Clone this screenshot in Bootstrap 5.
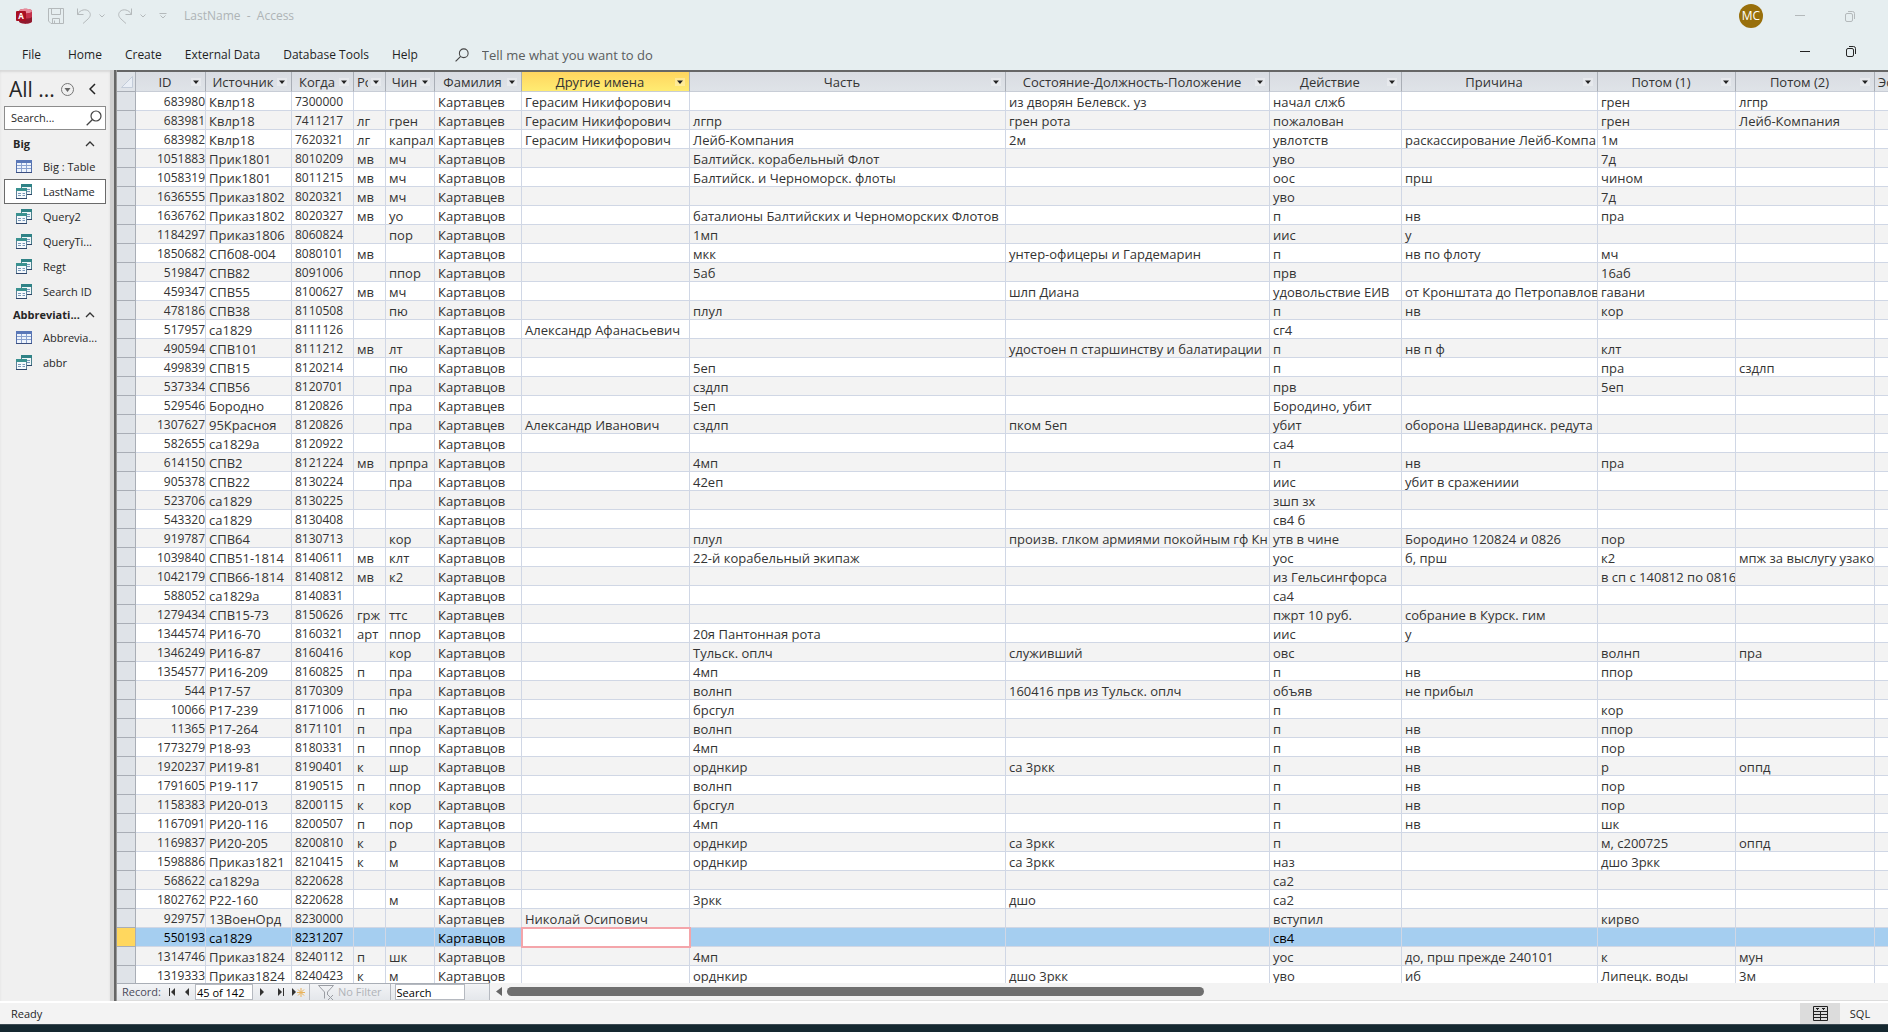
<!DOCTYPE html>
<html lang="ru">
<head>
<meta charset="utf-8">
<meta name="viewport" content="width=device-width, initial-scale=1">
<title>LastName - Access</title>
<link href="https://cdn.jsdelivr.net/npm/bootstrap@5.3.0/dist/css/bootstrap.min.css" rel="stylesheet">
<script src="https://cdn.jsdelivr.net/npm/bootstrap@5.3.0/dist/js/bootstrap.bundle.min.js"></script>
<style>
  body { font-family: "Open Sans", "Noto Sans", sans-serif; font-size: 12px; line-height: 18px; color: #262626; background: #f0f0f0; }
  button, input { font: inherit; color: inherit; }
  button { background: none; border: 0; padding: 0; }
  svg { display: block; flex: none; }

  .app-top { background: #e6eef0; }
  .title-bar { height: 32px; padding: 0 17px 0 16px; color: #b4b9bb; }
  .title-bar .doc-title { margin-left: 17px; color: #aeb4b6; }
  .quick-tools { gap: 13px; margin-left: 16px; }
  .avatar { width: 24px; height: 24px; border-radius: 50%; background: #986f0b; color: #fff; }
  .ribbon { height: 38px; padding: 14px 32px 0 22px; }
  .ribbon-tabs { gap: 23px; }
  .ribbon .ribbon-tab { color: #1f1f1f; text-decoration: none; }
  .tell-box { margin-left: 37px; gap: 13px; }
  .tell-me { width: 200px; border: 0; background: none; padding: 0; outline: 0; font-size: 13px; }
  .tell-me::placeholder { color: #5a5d5e; opacity: 1; }
  .doc-buttons { gap: 36px; }

  .nav-pane { width: 110px; background: #f0f0f0; box-shadow: inset 0 2px 2px #d8d8d8; padding: 2px 4px 0; }
  .nav-pane h1 { font-size: 21px; line-height: 32px; margin: 0; font-weight: 400; color: #262626; width: 52px; white-space: nowrap; }
  .pane-head { height: 34px; padding: 0 10px 0 5px; }
  .pane-search { width: 102px; height: 24px; margin-bottom: 3px; border: 1px solid #8c8c8c; background: #fff; padding: 0 3px 0 6px; }
  .pane-search input { border: 0; outline: 0; background: none; width: 70px; padding: 0; font-size: 11px; }
  .pane-search input::placeholder { color: #262626; opacity: 1; }
  .pane-group { height: 21px; padding: 0 11px 0 9px; font-size: 11px; font-weight: 700; width: 100%; }
  .pane-item { height: 25px; width: 102px; padding: 0 4px 0 11px; gap: 11px; font-size: 11px; color: #262626; text-decoration: none; border: 1px solid transparent; }
  .pane-item.active-item { background: #fff; border-color: #6a6a6a; }
  .splitter { width: 7px; background: linear-gradient(to right, #cfcfcf 0 4px, #666 4px 6px, #999 6px); }

  .sheet { border-top: 2px solid #666; background: #fff; min-width: 0; }
  .grid-wrap { flex: 1 1 0; overflow: hidden; }
  .datasheet { table-layout: fixed; width: 1800px; border-collapse: separate; border-spacing: 0; color: #333; font-size: 13px; }
  .datasheet th, .datasheet td { height: 19px; line-height: 16px; padding: 2px 0 0 3px; border-right: 1px solid #d0d7e5; border-bottom: 1px solid #d0d7e5; white-space: nowrap; overflow: hidden; }
  .datasheet thead th { height: 20px; font-weight: 400; background: linear-gradient(#d9dce2, #dfe3e8); border-right-color: #a9aeb6; border-bottom-color: #c8cdd6; padding: 0 4px 0 3px; }
  .datasheet thead th.picked { background: linear-gradient(#ffd55f, #ffec72); }
  .head-cell { height: 19px; line-height: 18px; }
  .head-cell span { flex: 1 1 0; overflow: hidden; text-align: center; }
  .datasheet thead th.cut span { text-align: left; margin-right: 3px; }
  .datasheet .row-sel { background: #dfe3e8; border-right-color: #a9aeb6; border-bottom-color: #a9aeb6; padding: 0; }
  .datasheet tbody tr:nth-child(even) td { background: #f3f3f3; }
  .datasheet td.digits { font-size: 12px; }
  .datasheet td.num { text-align: right; padding-left: 0; }
  .datasheet tbody tr.current td { background: #a5cef0; color: #000; }
  .datasheet tbody tr.current .row-sel { background: #ffd75e; }
  .datasheet tbody tr.current td.editing { background: #fff; outline: 2px solid #f4a5aa; outline-offset: -1px; position: relative; }

  .record-bar { height: 18px; background: #f3f3f3; border-bottom: 1px solid #dcdcdc; }
  .record-nav { width: 373px; height: 17px; font-size: 11px; line-height: 14px; background: linear-gradient(#f3f4f6, #e4e7eb); border-top: 1px solid #a9aeb6; border-right: 1px solid #b5b9c0; padding-left: 5px; color: #4a4a5a; }
  .record-nav input { height: 16px; border: 1px solid #b5b9c0; background: #fff; padding: 0 1px; color: #000; border-radius: 0; outline: 0; }
  .record-pos { width: 58px; margin: 0 7px 0 6px; }
  .record-find { width: 70px; }
  .nav-rule { width: 1px; height: 16px; background: #b5b9c0; }
  .muted-text { color: #b0b3b8; }
  .scroll-track { min-width: 0; padding-left: 5px; }
  .scroll-thumb { width: 50%; height: 9px; border-radius: 5px; background: #6f6f6f; }
  .status-bar { height: 21px; background: #f3f3f3; padding-left: 11px; font-size: 11px; }
  .status-wrap { background: #fff; padding-top: 2px; }
  .view-btn { width: 40px; height: 21px; }
  .view-btn.on { background: #dcdcdc; }
  .desk-edge { height: 8px; background: #152830; border-top: 1px solid #3c4a52; }
</style>
</head>
<body class="vh-100 overflow-hidden d-flex flex-column">

<svg width="0" height="0" class="position-absolute" aria-hidden="true">
  <symbol id="i-table" viewBox="0 0 16 13">
    <rect x=".5" y=".5" width="15" height="12" fill="#eef4fc" stroke="#5470ad"/>
    <rect x="0" y="0" width="16" height="3" fill="#5a78b8"/>
    <path d="M1 5.500H15M1 8.500H15M5.500 3V12M10.500 3V12" stroke="#8aa2d0" fill="none"/>
    <path d="M0 12.500H16" stroke="#3b4f80"/>
  </symbol>
  <symbol id="i-query" viewBox="0 0 16 15">
    <rect x="5.500" y=".5" width="10" height="10" fill="#eef6f8" stroke="#4a7f8c"/>
    <rect x="5" y="0" width="11" height="3" fill="#2f8286"/>
    <path d="M11 5.500H14M11 7.500H14" stroke="#7796b8"/>
    <rect x=".5" y="4.500" width="10" height="10" fill="#f5f9fc" stroke="#5d7f99"/>
    <rect x="0" y="4" width="11" height="3" fill="#3a9190"/>
    <path d="M2 9.500H5M6.500 9.500H9M2 11.500H5M6.500 11.500H9" stroke="#7796b8"/>
    <path d="M0 14.500H11M11 10.500H16" stroke="#2f466b"/>
  </symbol>
  <symbol id="i-drop" viewBox="0 0 10 8">
    <rect width="10" height="8" fill="#fff" opacity=".3"/>
    <path d="M2 2.500H8L5 6Z" fill="#222"/>
  </symbol>
  <symbol id="i-up" viewBox="0 0 10 6"><path d="M1 5L5 1L9 5" fill="none" stroke="#333" stroke-width="1.300"/></symbol>
  <symbol id="i-chev" viewBox="0 0 6 4"><path d="M.5 .5L3 3L5.500 .5" fill="none" stroke="#b4b9bb"/></symbol>
  <symbol id="i-find" viewBox="0 0 16 16"><circle cx="10" cy="6" r="5" fill="none" stroke="#444" stroke-width="1.200"/><path d="M6.500 9.500L.7 15.300" stroke="#444" stroke-width="1.300"/></symbol>
  <symbol id="i-restore" viewBox="0 0 10 11"><rect x=".5" y="2.500" width="7" height="8" rx="1.500" fill="none" stroke="currentColor"/><path d="M3 .5H7.500A2 2 0 0 1 9.500 2.500V8" fill="none" stroke="currentColor"/></symbol>
</svg>

<header class="app-top">
  <div class="title-bar d-flex align-items-center">
    <svg width="16" height="16" viewBox="0 0 16 16" role="img" aria-label="Access">
      <path d="M3 3C3 0 16 0 16 3V13C16 16.500 3 16.500 3 13Z" fill="#c4314b"/>
      <path d="M3 3C3 0 16 0 16 3C16 6 3 6 3 3Z" fill="#e88a9a"/>
      <path d="M3 9C5 11 14 11 16 9V13C16 16.500 3 16.500 3 13Z" fill="#8f1a2e"/>
      <rect x="0" y="3" width="10" height="10" rx="1" fill="#a80f22"/>
      <text x="5" y="11" text-anchor="middle" font-size="8" font-weight="700" fill="#fff">A</text>
    </svg>
    <div class="quick-tools d-flex align-items-center">
      <button aria-label="Save"><svg width="16" height="16" viewBox="0 0 16 16" fill="none" stroke="#b4b9bb"><path d="M.5 .5H15.500V15.500H3L.5 13ZM3.500 .5V6.500H12.500V.5M4.500 15.500V10.500H11.500V15.500M6.500 15.500V12.500"/></svg></button>
      <button class="d-flex align-items-center gap-2" aria-label="Undo"><svg width="14" height="16" viewBox="0 0 14 16" fill="none" stroke="#b4b9bb"><path d="M.5 .5V6.500H6.500M.5 6.500C3 1.500 9 .5 12 3.500C14.500 6.500 13 9 11 11L6 15.500"/></svg><svg width="6" height="4"><use href="#i-chev"/></svg></button>
      <button class="d-flex align-items-center gap-2" aria-label="Redo"><svg width="14" height="16" viewBox="0 0 14 16" fill="none" stroke="#b4b9bb"><path d="M13.500 .5V6.500H7.500M13.500 6.500C11 1.500 5 .5 2 3.500C-.5 6.500 1 9 3 11L8 15.500"/></svg><svg width="6" height="4"><use href="#i-chev"/></svg></button>
      <button aria-label="Customize toolbar"><svg width="8" height="6" viewBox="0 0 8 6"><path d="M.5 .5H7.500M1.500 2.500L4 5L6.500 2.500" fill="none" stroke="#b4b9bb"/></svg></button>
    </div>
    <span class="doc-title">LastName &nbsp;-&nbsp; Access</span>
    <span class="avatar ms-auto d-flex align-items-center justify-content-center">MC</span>
    <button class="ms-4 ps-2" aria-label="Minimize"><svg width="10" height="10" viewBox="0 0 10 10"><path d="M0 4.500H10" stroke="#b4b9bb"/></svg></button>
    <button class="ms-4 ps-3 pe-3" aria-label="Restore"><svg width="10" height="11"><use href="#i-restore"/></svg></button>
  </div>
  <div class="ribbon d-flex align-items-start">
    <nav class="ribbon-tabs d-flex">
      <a class="ribbon-tab me-1" href="#">File</a>
      <a class="ribbon-tab" href="#">Home</a>
      <a class="ribbon-tab" href="#">Create</a>
      <a class="ribbon-tab" href="#">External Data</a>
      <a class="ribbon-tab" href="#">Database Tools</a>
      <a class="ribbon-tab" href="#">Help</a>
    </nav>
    <label class="tell-box d-flex align-items-center"><svg width="14" height="14"><use href="#i-find"/></svg><input class="tell-me" type="text" placeholder="Tell me what you want to do" aria-label="Tell me what you want to do"></label>
    <div class="doc-buttons ms-auto d-flex align-items-center">
      <button aria-label="Minimize document"><svg width="10" height="10" viewBox="0 0 10 10"><path d="M0 4.500H10" stroke="#222"/></svg></button>
      <button aria-label="Restore document"><svg width="10" height="11"><use href="#i-restore"/></svg></button>
    </div>
  </div>
</header>

<div class="d-flex flex-grow-1 overflow-hidden">
  <aside class="nav-pane flex-shrink-0">
    <div class="pane-head d-flex align-items-center">
      <h1>All ...</h1>
      <button aria-label="Choose category"><svg width="13" height="13" viewBox="0 0 13 13"><circle cx="6.500" cy="6.500" r="6" fill="none" stroke="#777"/><path d="M3.500 5H9.500L6.500 9Z" fill="#666"/></svg></button>
      <button class="ms-auto" aria-label="Collapse pane"><svg width="7" height="12" viewBox="0 0 7 12"><path d="M6 1L1 6L6 11" fill="none" stroke="#222" stroke-width="1.500"/></svg></button>
    </div>
    <label class="pane-search d-flex align-items-center justify-content-between"><input type="text" placeholder="Search..." aria-label="Search objects"><svg width="16" height="16"><use href="#i-find"/></svg></label>
    <button class="pane-group d-flex align-items-center justify-content-between">Big<svg width="10" height="6"><use href="#i-up"/></svg></button>
    <a class="pane-item d-flex align-items-center" href="#"><svg width="16" height="13"><use href="#i-table"/></svg><span class="text-nowrap">Big : Table</span></a>
    <a class="pane-item active-item d-flex align-items-center" href="#"><svg width="16" height="15"><use href="#i-query"/></svg><span>LastName</span></a>
    <a class="pane-item d-flex align-items-center" href="#"><svg width="16" height="15"><use href="#i-query"/></svg><span>Query2</span></a>
    <a class="pane-item d-flex align-items-center" href="#"><svg width="16" height="15"><use href="#i-query"/></svg><span>QueryTi...</span></a>
    <a class="pane-item d-flex align-items-center" href="#"><svg width="16" height="15"><use href="#i-query"/></svg><span>Regt</span></a>
    <a class="pane-item d-flex align-items-center" href="#"><svg width="16" height="15"><use href="#i-query"/></svg><span>Search ID</span></a>
    <button class="pane-group d-flex align-items-center justify-content-between">Abbreviati...<svg width="10" height="6"><use href="#i-up"/></svg></button>
    <a class="pane-item d-flex align-items-center" href="#"><svg width="16" height="13"><use href="#i-table"/></svg><span>Abbrevia...</span></a>
    <a class="pane-item d-flex align-items-center" href="#"><svg width="16" height="15"><use href="#i-query"/></svg><span>abbr</span></a>
  </aside>
  <div class="splitter flex-shrink-0"></div>

  <main class="sheet flex-grow-1 d-flex flex-column">
    <div class="grid-wrap">
      <table class="datasheet">
        <colgroup id="cols"></colgroup>
        <thead><tr id="heads"></tr></thead>
        <tbody id="records"></tbody>
      </table>
    </div>
    <div class="record-bar d-flex">
      <div class="record-nav d-flex align-items-center flex-shrink-0">
        <label for="pos">Record:</label>
        <button class="ms-2" aria-label="First record"><svg width="7" height="8" viewBox="0 0 7 8"><path d="M.5 0V8" stroke="#333"/><path d="M6 0V8L2 4Z" fill="#333"/></svg></button>
        <button class="ms-2" aria-label="Previous record"><svg width="5" height="8" viewBox="0 0 5 8"><path d="M5 0V8L1 4Z" fill="#333"/></svg></button>
        <input class="record-pos" id="pos" type="text" value="45 of 142">
        <button aria-label="Next record"><svg width="5" height="8" viewBox="0 0 5 8"><path d="M0 0V8L4 4Z" fill="#333"/></svg></button>
        <button class="ms-2 ps-1" aria-label="Last record"><svg width="7" height="8" viewBox="0 0 7 8"><path d="M6.500 0V8" stroke="#333"/><path d="M1 0V8L5 4Z" fill="#333"/></svg></button>
        <button class="ms-2" aria-label="New record"><svg width="13" height="9" viewBox="0 0 13 9"><path d="M0 0V8L4 4Z" fill="#333"/><path d="M9 0V9M5 4.500H13M6 1.500L12 7.500M12 1.500L6 7.500" stroke="#e8b25a"/></svg></button>
        <span class="nav-rule ms-1 me-2"></span>
        <svg width="16" height="15" viewBox="0 0 16 15" fill="none" stroke="#9a9da3"><path d="M.5 .5H15.500L9.500 7V10M.5 .5L6.500 7V13.500M10 10L15 15M15 10L10 15"/></svg>
        <span class="muted-text ms-1 text-nowrap">No Filter</span>
        <span class="nav-rule ms-2 me-1"></span>
        <input class="record-find" type="text" value="Search" aria-label="Search records">
      </div>
      <div class="scroll-track flex-grow-1 d-flex align-items-center gap-1">
        <svg width="8" height="9" viewBox="0 0 8 9"><path d="M7 0V9L1 4.500Z" fill="#666"/></svg>
        <div class="scroll-thumb"></div>
      </div>
    </div>
  </main>
</div>

<footer class="status-wrap">
  <div class="status-bar d-flex align-items-center">
    <span>Ready</span>
    <button class="view-btn on ms-auto d-flex align-items-center justify-content-center" aria-label="Datasheet view"><svg width="15" height="15" viewBox="0 0 15 15" fill="none" stroke="#222"><path d="M.5 .5H14.500V14.500H.5ZM.5 5.500H14.500M.5 8.500H14.500M.5 11.500H14.500M7.500 5.500V14.500M3 2.500H6M9 2.500H12M4 3.500H5M10 3.500H11"/></svg></button>
    <button class="view-btn me-2">SQL</button>
  </div>
  <div class="desk-edge"></div>
</footer>

<script>
  // name, column width
  const columns = [["ID",70],["Источник",86],["Когда",62],["Ро",32],["Чин",49],["Фамилия",87],["Другие имена",168],["Часть",316],["Состояние-Должность-Положение",264],["Действие",132],["Причина",196],["Потом (1)",138],["Потом (2)",139],["Эс",100]];
  const data = `683980|Квлр18|7300000|||Картавцев|Герасим Никифорович||из дворян Белевск. уз|начал слжб||грен|лгпр
683981|Квлр18|7411217|лг|грен|Картавцев|Герасим Никифорович|лгпр|грен рота|пожалован||грен|Лейб-Компания
683982|Квлр18|7620321|лг|капрал|Картавцев|Герасим Никифорович|Лейб-Компания|2м|увлотств|раскассирование Лейб-Компа|1м|
1051883|Прик1801|8010209|мв|мч|Картавцов||Балтийск. корабельный Флот||уво||7д|
1058319|Прик1801|8011215|мв|мч|Картавцов||Балтийск. и Черноморск. флоты||оос|прш|чином|
1636555|Приказ1802|8020321|мв|мч|Картавцев||||уво||7д|
1636762|Приказ1802|8020327|мв|уо|Картавцов||баталионы Балтийских и Черноморских Флотов||п|нв|пра|
1184297|Приказ1806|8060824||пор|Картавцов||1мп||иис|у||
1850682|СПб08-004|8080101|мв||Картавцов||мкк|унтер-офицеры и Гардемарин|п|нв по флоту|мч|
519847|СПВ82|8091006||ппор|Картавцов||5аб||прв||16аб|
459347|СПВ55|8100627|мв|мч|Картавцов|||шлп Диана|удовольствие ЕИВ|от Кронштата до Петропавлов|гавани|
478186|СПВ38|8110508||пю|Картавцов||плул||п|нв|кор|
517957|са1829|8111126|||Картавцов|Александр Афанасьевич|||сг4|||
490594|СПВ101|8111212|мв|лт|Картавцов|||удостоен п старшинству и балатирации|п|нв п ф|клт|
499839|СПВ15|8120214||пю|Картавцов||5еп||п||пра|сздлп
537334|СПВ56|8120701||пра|Картавцов||сздлп||прв||5еп|
529546|Бородно|8120826||пра|Картавцев||5еп||Бородино, убит|||
1307627|95Красноя|8120826||пра|Картавцев|Александр Иванович|сздлп|пком 5еп|убит|оборона Шевардинск. редута||
582655|са1829а|8120922|||Картавцов||||са4|||
614150|СПВ2|8121224|мв|прпра|Картавцов||4мп||п|нв|пра|
905378|СПВ22|8130224||пра|Картавцов||42еп||иис|убит в сражениии||
523706|са1829|8130225|||Картавцов||||зшп зх|||
543320|са1829|8130408|||Картавцов||||св4 б|||
919787|СПВ64|8130713||кор|Картавцов||плул|произв. глком армиями покойным гф Кн|утв в чине|Бородино 120824 и 0826|пор|
1039840|СПВ51-1814|8140611|мв|клт|Картавцов||22-й корабельный экипаж||уос|б, прш|к2|мпж за выслугу узако
1042179|СПВ66-1814|8140812|мв|к2|Картавцов||||из Гельсингфорса||в сп с 140812 по 0816|
588052|са1829а|8140831|||Картавцов||||са4|||
1279434|СПВ15-73|8150626|грж|ттс|Картавцев||||пжрт 10 руб.|собрание в Курск. гим||
1344574|РИ16-70|8160321|арт|ппор|Картавцов||20я Пантонная рота||иис|у||
1346249|РИ16-87|8160416||кор|Картавцов||Тульск. оплч|служивший|овс||волнп|пра
1354577|РИ16-209|8160825|п|пра|Картавцов||4мп||п|нв|ппор|
544|Р17-57|8170309||пра|Картавцов||волнп|160416 прв из Тульск. оплч|объяв|не прибыл||
10066|Р17-239|8171006|п|пю|Картавцов||брсгул||п||кор|
11365|Р17-264|8171101|п|пра|Картавцов||волнп||п|нв|ппор|
1773279|Р18-93|8180331|п|ппор|Картавцов||4мп||п|нв|пор|
1920237|РИ19-81|8190401|к|шр|Картавцов||орднкир|са 3ркк|п|нв|р|оппд
1791605|Р19-117|8190515|п|ппор|Картавцов||волнп||п|нв|пор|
1158383|РИ20-013|8200115|к|кор|Картавцов||брсгул||п|нв|пор|
1167091|РИ20-116|8200507|п|пор|Картавцов||4мп||п|нв|шк|
1169837|РИ20-205|8200810|к|р|Картавцов||орднкир|са 3ркк|п||м, с200725|оппд
1598886|Приказ1821|8210415|к|м|Картавцов||орднкир|са 3ркк|наз||дшо 3ркк|
568622|са1829а|8220628|||Картавцов||||са2|||
1802762|Р22-160|8220628||м|Картавцов||3ркк|дшо|са2|||
929757|13ВоенОрд|8230000|||Картавцев|Николай Осипович|||вступил||кирво|
550193|са1829|8231207|||Картавцов||||св4|||
1314746|Приказ1824|8240112|п|шк|Картавцов||4мп||уос|до, прш прежде 240101|к|мун
1319333|Приказ1824|8240423|к|м|Картавцов||орднкир|дшо 3ркк|уво|иб|Липецк. воды|3м`.split("\n").map(r => r.split("|"));

  document.getElementById("cols").innerHTML = `<col style="width:19px">` + columns.map(c => `<col style="width:${c[1]}px">`).join("");
  document.getElementById("heads").innerHTML =
    `<th class="row-sel" aria-label="Select all"><svg class="ms-1" width="12" height="12" viewBox="0 0 12 12"><path d="M11.500 .5V11.500H.5Z" fill="#e9eef5" stroke="#c3ccd9"/></svg></th>` +
    columns.map((c, i) => `<th scope="col" class="${i === 6 ? "picked" : i === 3 || i === 13 ? "cut" : ""}"><div class="head-cell d-flex align-items-center"><span>${c[0]}</span><svg width="10" height="8"><use href="#i-drop"/></svg></div></th>`).join("");
  const currentId = "550193";
  document.getElementById("records").innerHTML = data.map(r => {
    const now = r[0] === currentId;
    return `<tr class="${now ? "current" : ""}"><th class="row-sel" aria-label="Select record"></th>` +
      columns.map((c, i) => `<td class="${i === 0 ? "num digits" : i === 2 ? "digits" : now && i === 6 ? "editing" : ""}">${r[i] || ""}</td>`).join("") + "</tr>";
  }).join("");
</script>
</body>
</html>
